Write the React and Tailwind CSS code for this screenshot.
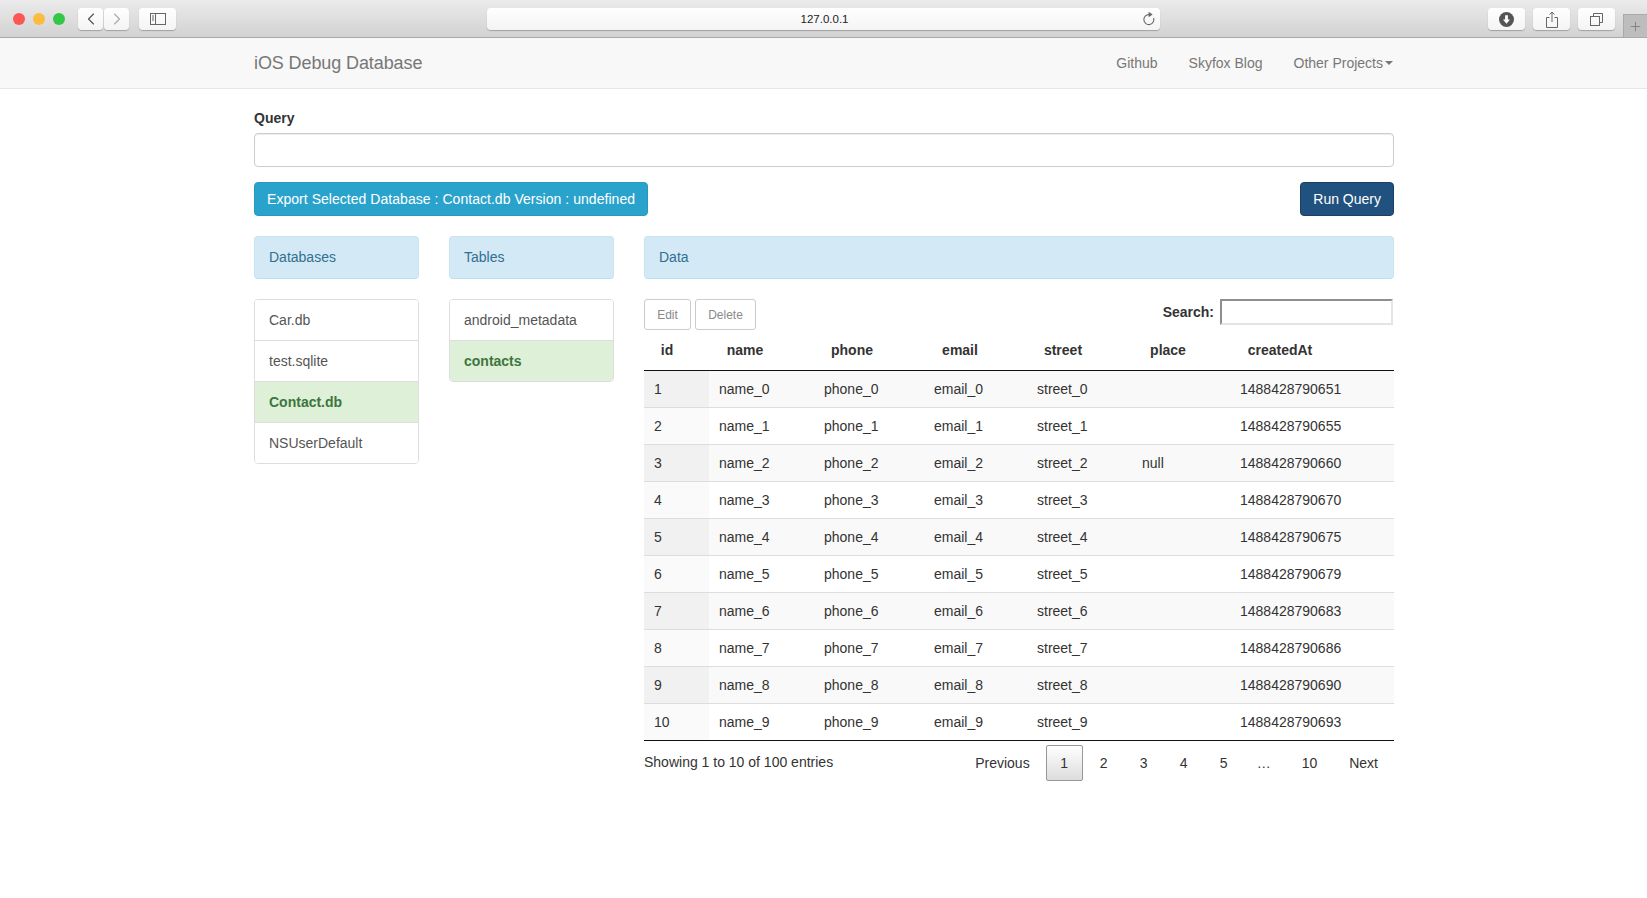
import { ChevronLeft, ChevronRight, Plus } from 'lucide-react';

const rows = [
  ['1', '0', '', '1488428790651'],
  ['2', '1', '', '1488428790655'],
  ['3', '2', 'null', '1488428790660'],
  ['4', '3', '', '1488428790670'],
  ['5', '4', '', '1488428790675'],
  ['6', '5', '', '1488428790679'],
  ['7', '6', '', '1488428790683'],
  ['8', '7', '', '1488428790686'],
  ['9', '8', '', '1488428790690'],
  ['10', '9', '', '1488428790693'],
];

const headers = [
  ['id', 'w-[46px]'],
  ['name', 'w-[110px]'],
  ['phone', 'w-[104px]'],
  ['email', 'w-[112px]'],
  ['street', 'w-[94px]'],
  ['place', 'w-[116px]'],
  ['createdAt', 'w-[108px]'],
  ['', 'w-[60px]'],
];

function ToolButton({ className, children }) {
  return (
    <div className={`flex h-[22px] items-center justify-center rounded-[4px] bg-gradient-to-b from-white to-[#f4f4f4] shadow-[0_1px_1px_rgba(0,0,0,0.25)] ${className}`}>
      {children}
    </div>
  );
}

function TitleBar() {
  return (
    <div className="flex h-[38px] items-start border-b border-[#a9a9a9] bg-gradient-to-b from-[#ebebeb] to-[#d2d2d2] pl-[13px]">
      <div className="mt-[13px] flex gap-2">
        <span className="h-3 w-3 rounded-full bg-[#fc5753]" />
        <span className="h-3 w-3 rounded-full bg-[#fdbc40]" />
        <span className="h-3 w-3 rounded-full bg-[#33c748]" />
      </div>
      <div className="ml-[13px] mt-2 flex gap-px">
        <ToolButton className="w-[25px]">
          <ChevronLeft size={20} strokeWidth={1.4} className="text-[#555]" />
        </ToolButton>
        <ToolButton className="w-[25px]">
          <ChevronRight size={20} strokeWidth={1.4} className="text-[#aaa]" />
        </ToolButton>
      </div>
      <ToolButton className="ml-[10px] mt-2 w-[37px]">
        <svg width="16" height="12" viewBox="0 0 16 12" fill="none" stroke="#666" strokeWidth="1">
          <rect x="0.5" y="0.5" width="15" height="11" />
          <path d="M5.500 0.500v11M2 3h2M2 5h2M2 7h2" />
        </svg>
      </ToolButton>
      <ToolButton className="relative ml-[311px] mt-2 w-[673px]">
        <span className="ml-[2px] text-[11.5px] text-[#222]">127.0.0.1</span>
        <svg width="14" height="15" viewBox="0 0 14 15" fill="none" className="absolute right-[5px] top-[3px]">
          <path d="M8 3.600a5 5 0 1 0 4.600 3.400" stroke="#666" strokeWidth="1.100" />
          <path d="M7.600 0.800l4 2.800-4 2.600z" fill="#666" />
        </svg>
      </ToolButton>
      <ToolButton className="ml-[328px] mt-2 w-[37px]">
        <svg width="15" height="15" viewBox="0 0 14 14">
          <circle cx="7" cy="7" r="7" fill="#555" />
          <path d="M5.700 3h2.600v4h2L7 11 3.700 7h2z" fill="#fff" />
        </svg>
      </ToolButton>
      <ToolButton className="ml-2 mt-2 w-[37px]">
        <svg width="12" height="17" viewBox="0 0 12 17" fill="none" stroke="#666" strokeWidth="1">
          <path d="M3.500 6.500h-3v10h11v-10h-3M6 11V1M3.500 3.500 6 1l2.500 2.500" />
        </svg>
      </ToolButton>
      <ToolButton className="ml-2 mt-2 w-[37px]">
        <svg width="13" height="13" viewBox="0 0 13 13" fill="none" stroke="#666" strokeWidth="1">
          <rect x="0.500" y="3.500" width="9" height="9" />
          <path d="M3.500 3.500v-3h9v9h-3" />
        </svg>
      </ToolButton>
      <div className="ml-2 mt-[14px] flex h-[23px] flex-1 items-center justify-center border-l border-t border-[#a9a9a9] bg-[#bdbdbd]">
        <Plus size={15} strokeWidth={1} className="text-[#666]" />
      </div>
    </div>
  );
}

function Navbar() {
  return (
    <div className="flex h-[51px] items-center justify-between border-b border-[#e7e7e7] bg-[#f8f8f8] pl-[254px] pr-[254px]">
      <span className="text-[18px] tracking-[-0.1px] text-[#777]">iOS Debug Database</span>
      <div className="flex items-center gap-[30px] text-[#777]">
        <span className="mr-px">Github</span>
        <span className="mr-px">Skyfox Blog</span>
        <span className="flex items-center">
          Other Projects
          <span className="ml-[2px] h-0 w-0 border-x-4 border-t-4 border-x-transparent border-t-[#777]" />
        </span>
      </div>
    </div>
  );
}

function PanelHead({ children }) {
  return (
    <div className="h-[43px] rounded border border-[#c9e5f2] border-b-[#bde0ee] bg-[#d3e9f6] px-[14px] py-[10px] text-[#31708f]">
      {children}
    </div>
  );
}

function ListGroup({ items, active }) {
  return (
    <div className="mt-5 overflow-hidden rounded border border-[#ddd]">
      {items.map((item, i) => (
        <div
          key={item}
          className={`px-[14px] pt-[10px] ${i > 0 ? 'h-[41px] border-t border-[#ddd]' : 'h-[40px]'} ${
            item === active ? 'bg-[#dff0d8] font-bold text-[#3c763d]' : 'bg-white text-[#555]'
          }`}
        >
          {item}
        </div>
      ))}
    </div>
  );
}

function DataTable() {
  return (
    <div>
      <div className="mt-5 flex items-start justify-between">
        <div className="flex gap-1 text-[12px] text-[#8a8a8a]">
          <button className="h-[31px] w-[47px] rounded-[3px] border border-[#ccc] bg-white">Edit</button>
          <button className="h-[31px] w-[61px] rounded-[3px] border border-[#ccc] bg-white">Delete</button>
        </div>
        <div className="mr-px flex items-center">
          <span className="mr-[6px] font-bold">Search:</span>
          <input className="h-[26px] w-[173px] border-2 border-b-[#e4e4e4] border-l-[#8f8f8f] border-r-[#e4e4e4] border-t-[#8f8f8f] bg-white" />
        </div>
      </div>
      <table className="w-[750px] table-fixed border-collapse">
        <thead>
          <tr className="h-[40px] border-b border-[#111]">
            {headers.map(([label, width]) => (
              <th key={label} className={`${width} p-0 text-center font-bold`}>
                {label}
              </th>
            ))}
          </tr>
        </thead>
      </table>
      <table className="w-[750px] table-fixed border-collapse">
        <colgroup>
          <col className="w-[65px]" />
          <col className="w-[105px]" />
          <col className="w-[110px]" />
          <col className="w-[103px]" />
          <col className="w-[105px]" />
          <col className="w-[98px]" />
          <col className="w-[164px]" />
        </colgroup>
        <tbody>
          {rows.map(([id, n, place, createdAt], i) => {
            const odd = i % 2 === 0;
            return (
              <tr key={id} className={`h-[35px] ${i < 9 ? 'border-b border-[#ddd]' : 'border-b border-[#111]'} ${odd ? 'bg-[#f9f9f9]' : 'bg-white'}`}>
                <td className={`px-[10px] py-2 ${odd ? 'bg-[#f1f1f1]' : 'bg-[#fafafa]'}`}>{id}</td>
                <td className="px-[10px] py-2">name_{n}</td>
                <td className="px-[10px] py-2">phone_{n}</td>
                <td className="px-[10px] py-2">email_{n}</td>
                <td className="px-[10px] py-2">street_{n}</td>
                <td className="px-[10px] py-2">{place}</td>
                <td className="px-[10px] py-2">{createdAt}</td>
              </tr>
            );
          })}
        </tbody>
      </table>
      <div className="flex items-start justify-between">
        <div className="pt-[11px]">Showing 1 to 10 of 100 entries</div>
        <div className="mt-[4px] flex items-center gap-[2px] text-[#333]">
          <span className="py-2 pl-4 pr-[14px]">Previous</span>
          <span className="h-[36px] w-[37px] rounded-[2px] border border-[#979797] bg-gradient-to-b from-white to-[#dcdcdc] py-[7px] text-center">1</span>
          <span className="w-[38px] py-2 text-center">2</span>
          <span className="w-[38px] py-2 text-center">3</span>
          <span className="w-[38px] py-2 text-center">4</span>
          <span className="w-[38px] py-2 text-center">5</span>
          <span className="mr-[3px] w-[38px] py-2 text-center">…</span>
          <span className="px-[14px] py-2 text-center">10</span>
          <span className="px-4 py-2">Next</span>
        </div>
      </div>
    </div>
  );
}

export default function App() {
  return (
    <div className="min-h-screen bg-white font-['Liberation_Sans',Arial,sans-serif] text-[14px] leading-5 text-[#333]">
      <TitleBar />
      <Navbar />
      <div className="ml-[254px] w-[1140px]">
        <label className="mt-[19px] block font-bold">Query</label>
        <input className="mt-[5px] block h-[34px] w-full rounded border border-[#ccc] bg-white shadow-[inset_0_1px_1px_rgba(0,0,0,0.075)]" />
        <div className="mt-[15px] flex justify-between">
          <button className="h-[34px] rounded border border-[#269abc] bg-[#2aa3cc] px-3 tracking-[0.04px] text-white">
            Export Selected Database : Contact.db Version : undefined
          </button>
          <button className="h-[34px] rounded border border-[#1a3f63] bg-[#21517f] px-3 text-white">Run Query</button>
        </div>
        <div className="mt-5 grid grid-cols-[165px_165px_750px] gap-x-[30px]">
          <div>
            <PanelHead>Databases</PanelHead>
            <ListGroup items={['Car.db', 'test.sqlite', 'Contact.db', 'NSUserDefault']} active="Contact.db" />
          </div>
          <div>
            <PanelHead>Tables</PanelHead>
            <ListGroup items={['android_metadata', 'contacts']} active="contacts" />
          </div>
          <div>
            <PanelHead>Data</PanelHead>
            <DataTable />
          </div>
        </div>
      </div>
    </div>
  );
}
